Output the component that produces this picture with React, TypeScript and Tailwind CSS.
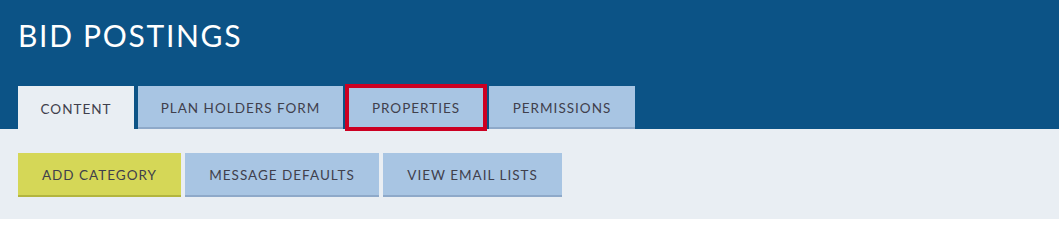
const tabs = [
  { label: "CONTENT", width: "w-[116px]", active: true },
  { label: "PLAN HOLDERS FORM", width: "w-[205px]" },
  { label: "PROPERTIES", width: "w-[138px]", marked: true },
  { label: "PERMISSIONS", width: "w-[146px]" },
];

const actions = [
  { label: "ADD CATEGORY", width: "w-[163px]", primary: true },
  { label: "MESSAGE DEFAULTS", width: "w-[194px]" },
  { label: "VIEW EMAIL LISTS", width: "w-[179px]" },
];

export default function App() {
  return (
    <div className="h-[219px] w-[1059px] bg-[#e9eef3] font-['Lato','Open_Sans',sans-serif]">
      <header className="bg-[#0c5386] px-[18px] pt-[17px]">
        <h1 className="text-[30px] leading-[36px] tracking-[1.7px] text-white">BID POSTINGS</h1>
        <nav className="mt-[33px] flex gap-[4px]">
          {tabs.map((tab) => (
            <button
              key={tab.label}
              className={`${tab.width} h-[43px] pt-[3px] text-[13.5px] tracking-[1px] text-[#40404c] ${
                tab.active
                  ? "bg-[#e9eef3]"
                  : "border-b-2 border-[#8ea9c9] bg-[#a8c5e3]"
              } ${tab.marked ? "outline-4 -outline-offset-2 outline-[#cc0022]" : ""}`}
            >
              {tab.label}
            </button>
          ))}
        </nav>
      </header>

      <div className="flex gap-[4px] px-[18px] pt-[24px]">
        {actions.map((a) => (
          <button
            key={a.label}
            className={`${a.width} h-[44px] border-b-2 pt-[2px] text-[13.5px] tracking-[1px] text-[#40404c] ${
              a.primary ? "border-[#b3b53e] bg-[#d5d757]" : "border-[#8ea9c9] bg-[#a8c5e3]"
            }`}
          >
            {a.label}
          </button>
        ))}
      </div>
    </div>
  );
}
